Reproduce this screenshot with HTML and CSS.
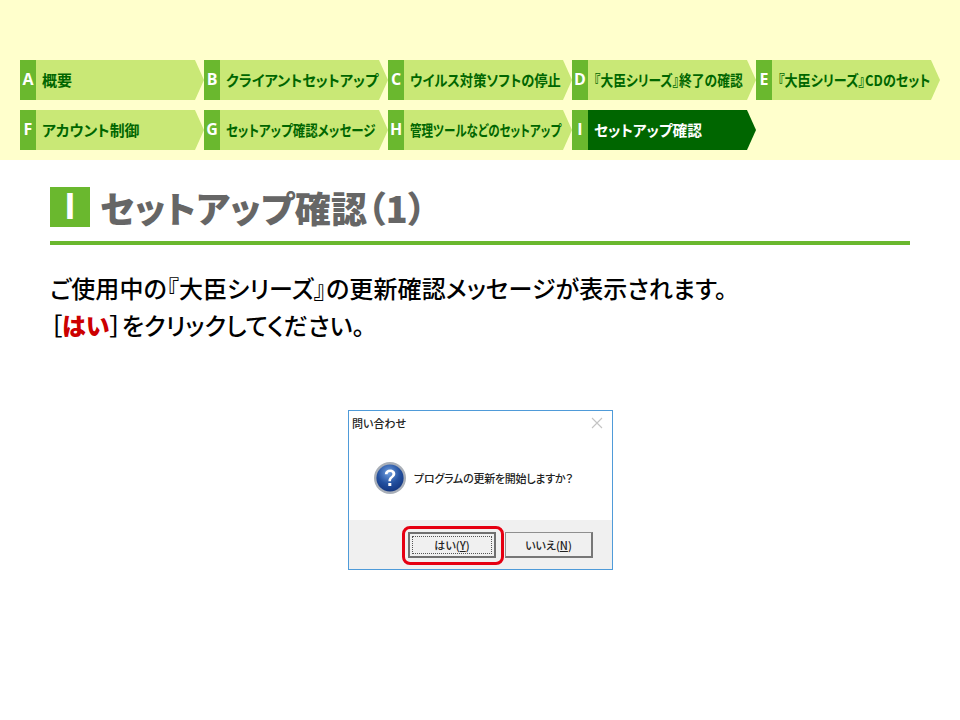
FILE: index.html
```html
<!DOCTYPE html>
<html lang="ja">
<head>
<meta charset="utf-8">
<title>セットアップ確認</title>
<link rel="stylesheet" href="styles.css">
</head>
<body>
<header class="header">
  <nav class="steps">
    <a class="step"><span class="key">A</span><span class="label">概要</span></a>
    <a class="step"><span class="key">B</span><span class="label sq-b">クライアントセットアップ</span></a>
    <a class="step"><span class="key">C</span><span class="label sq-c">ウイルス対策ソフトの停止</span></a>
    <a class="step"><span class="key">D</span><span class="label sq-d">『大臣シリーズ』終了の確認</span></a>
    <a class="step"><span class="key">E</span><span class="label sq-e">『大臣シリーズ』CDのセット</span></a>
    <a class="step"><span class="key">F</span><span class="label sq-f">アカウント制御</span></a>
    <a class="step"><span class="key">G</span><span class="label sq-g">セットアップ確認メッセージ</span></a>
    <a class="step"><span class="key">H</span><span class="label sq-h">管理ツールなどのセットアップ</span></a>
    <a class="step current"><span class="key">I</span><span class="label sq-i">セットアップ確認</span></a>
  </nav>
</header>
<main class="main">
  <h1 class="title"><span class="badge">I</span><span class="title-text">セットアップ確認（1）</span></h1>
  <p class="lead">ご使用中の『大臣シリーズ』の更新確認メッセージが表示されます。<br>［<strong class="hl">はい</strong>］をクリックしてください。</p>
  <div class="figure">
    <div class="dialog">
      <div class="dialog-body">
        <div class="titlebar">
          <span class="dialog-title">問い合わせ</span>
          <svg class="close" width="12" height="12" viewBox="0 0 12 12"><path d="M1 1L11 11M11 1L1 11" stroke="#c4c4c4" stroke-width="1.1" fill="none"/></svg>
        </div>
        <div class="message">
          <svg class="qicon" width="34" height="34" viewBox="0 0 34 34">
            <defs>
              <radialGradient id="q" cx="45%" cy="30%" r="75%"><stop offset="0" stop-color="#6f9fe0"/><stop offset=".55" stop-color="#23509f"/><stop offset="1" stop-color="#12337c"/></radialGradient>
            </defs>
            <circle cx="17" cy="17" r="16" fill="#a9afb8"/>
            <circle cx="17" cy="17" r="13.6" fill="url(#q)"/>
            <path d="M11.8 13.2c.3-3 2.4-4.6 5.3-4.6 3 0 5.2 1.6 5.2 4.2 0 3.8-4.3 3.6-4.3 7.4h-2.6c0-4.800 4-4.600 4-7.200 0-1.300-.9-2.100-2.300-2.100-1.500 0-2.300.9-2.500 2.300z" fill="#fff"/>
            <rect x="15.300" y="22" width="3" height="3" fill="#fff"/>
          </svg>
          <span class="message-text">プログラムの更新を開始しますか？</span>
        </div>
      </div>
      <div class="dialog-foot">
        <span class="btn default">はい(<u>Y</u>)</span>
        <span class="btn">いいえ(<u>N</u>)</span>
      </div>
      <span class="callout"></span>
    </div>
  </div>
</main>
</body>
</html>
```
FILE: styles.css
```css
* { box-sizing: border-box; }
html, body { margin: 0; padding: 0; }
body {
  width: 960px;
  height: 720px;
  overflow: hidden;
  background: #fff;
  font-family: "Noto Sans CJK JP", "Noto Sans", sans-serif;
  font-feature-settings: "palt";
}
.header {
  height: 160px;
  background: #ffffcc;
  padding: 60px 0 0 20px;
}
.steps {
  display: grid;
  grid-template-columns: repeat(5, 184px);
  grid-auto-rows: 40px;
  row-gap: 10px;
}
.step {
  display: flex;
  width: 184px;
  height: 40px;
  background: #c9e876;
  clip-path: polygon(0 0, 175px 0, 184px 20px, 175px 40px, 0 40px);
  color: #006600;
  align-items: center;
}
.key {
  flex: 0 0 16px;
  height: 40px;
  background: #6ab82e;
  color: #fff;
  font-family: "Open Sans", sans-serif;
  font-weight: 700;
  font-size: 16px;
  line-height: 39px;
  text-align: center;
}
.label {
  flex: none;
  margin: -2px 0 0 6px;
  font-size: 15px;
  font-weight: 700;
  white-space: nowrap;
  transform-origin: left center;
}
.sq-b { transform: scaleX(0.95); }
.sq-c { transform: scaleX(0.884); }
.sq-d { transform: scaleX(0.85); }
.sq-e { transform: scaleX(0.87); }
.sq-f { transform: scaleX(0.99); }
.sq-g { transform: scaleX(0.833); }
.sq-h { transform: scaleX(0.769); }
.sq-i { transform: scaleX(0.98); }
.step.current { background: #006600; color: #fff; }
.main { padding: 29px 50px 0; }
.title {
  margin: 0;
  display: flex;
  align-items: center;
  height: 56px;
  padding-bottom: 16px;
  border-bottom: 4px solid #6ab82e;
  color: #666;
  font-size: 36px;
  font-weight: 900;
  line-height: 40px;
}
.badge {
  width: 40px;
  height: 40px;
  background: #6ab82e;
  color: #fff;
  text-align: center;
  font-family: "Open Sans", sans-serif;
  font-weight: 700;
  font-size: 36px;
  line-height: 38px;
  margin-right: 10px;
}
.title-text { white-space: nowrap; letter-spacing: 0.4px; }
.lead {
  margin: 24px 0 0;
  font-size: 24px;
  font-weight: 500;
  line-height: 37px;
  letter-spacing: 0.1px;
  color: #000;
  white-space: nowrap;
}
.hl { color: #cc0000; font-weight: 900; }
.figure { display: flex; justify-content: center; margin-top: 67px; padding-left: 1px; }
.dialog {
  position: relative;
  width: 265px;
  height: 160px;
  border: 1px solid #4f9bd9;
  background: #fff;
  display: flex;
  flex-direction: column;
  color: #222;
  font-size: 11px;
  font-weight: 500;
}
.dialog-body { flex: 1; }
.titlebar {
  display: flex;
  justify-content: space-between;
  align-items: center;
  padding: 2px 9px 0 3px;
  height: 22px;
}
.message {
  display: flex;
  align-items: center;
  gap: 7px;
  padding: 28px 0 0 24px;
}
.message-text { letter-spacing: -0.25px; }
.dialog-foot {
  height: 49px;
  background: #f0f0f0;
  display: flex;
  gap: 9px;
  padding: 12px 0 0 59px;
}
.btn {
  width: 88px;
  height: 26px;
  background: #f0f0f0;
  border: 1px solid #8f8f8f;
  border-right: 2px solid #777;
  border-bottom: 2px solid #777;
  display: flex;
  align-items: center;
  justify-content: center;
  white-space: nowrap;
}
.btn u { text-decoration: underline; }
.btn.default {
  border: 2px solid #707070;
  outline: 1px dotted #555;
  outline-offset: -5px;
}
.callout {
  position: absolute;
  left: 53px;
  top: 115px;
  width: 102px;
  height: 39px;
  border: 3px solid #e60012;
  border-radius: 8px;
}
```
